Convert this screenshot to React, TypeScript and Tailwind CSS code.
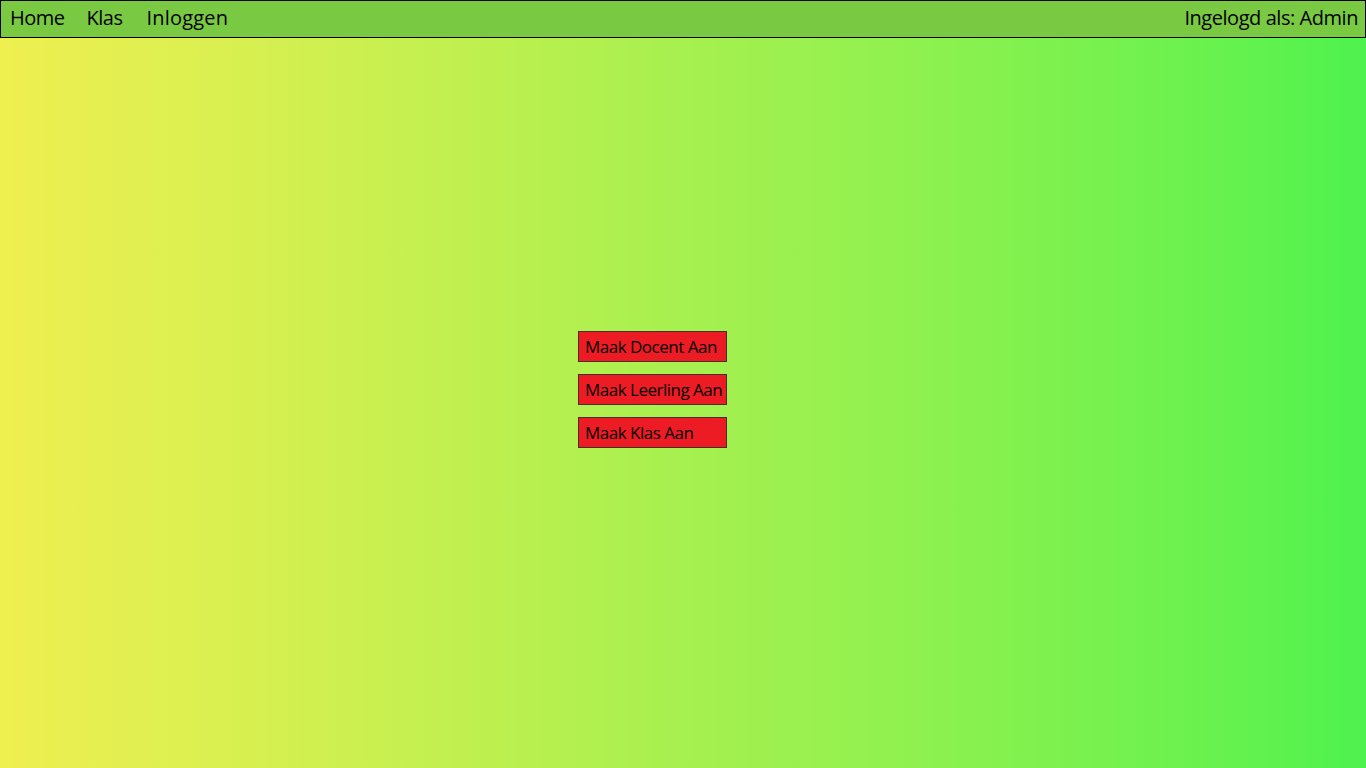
export default function App() {
  const font = { fontFamily: '"Open Sans", "Noto Sans", sans-serif' };
  return (
    <div
      className="w-[1366px] h-[768px] flex flex-col bg-gradient-to-r from-[#efef50] via-[#a6f04f] to-[#4df24e] text-black"
      style={font}
    >
      <div className="h-[38px] bg-[#7ac943] border border-black flex items-center justify-between pl-[9px] pr-[7px]">
        <div className="flex items-center text-[20px] tracking-[-0.5px] -mt-[2px]">
          <span className="mr-[22px]">Home</span>
          <span className="mr-[24px]">Klas</span>
          <span className="tracking-[0.2px]">Inloggen</span>
        </div>
        <span className="text-[20px] tracking-[-0.45px] -mt-[2px]">Ingelogd als: Admin</span>
      </div>
      <div className="flex flex-col gap-[12px] pl-[578px] pt-[293px]">
        {["Maak Docent Aan", "Maak Leerling Aan", "Maak Klas Aan"].map((t) => (
          <div
            key={t}
            className="w-[149px] h-[31px] bg-[#ed1c24] border border-[#4a2c1c] flex items-center pl-[6px] text-[17px] tracking-[-0.5px] whitespace-nowrap"
          >
            {t}
          </div>
        ))}
      </div>
    </div>
  );
}
